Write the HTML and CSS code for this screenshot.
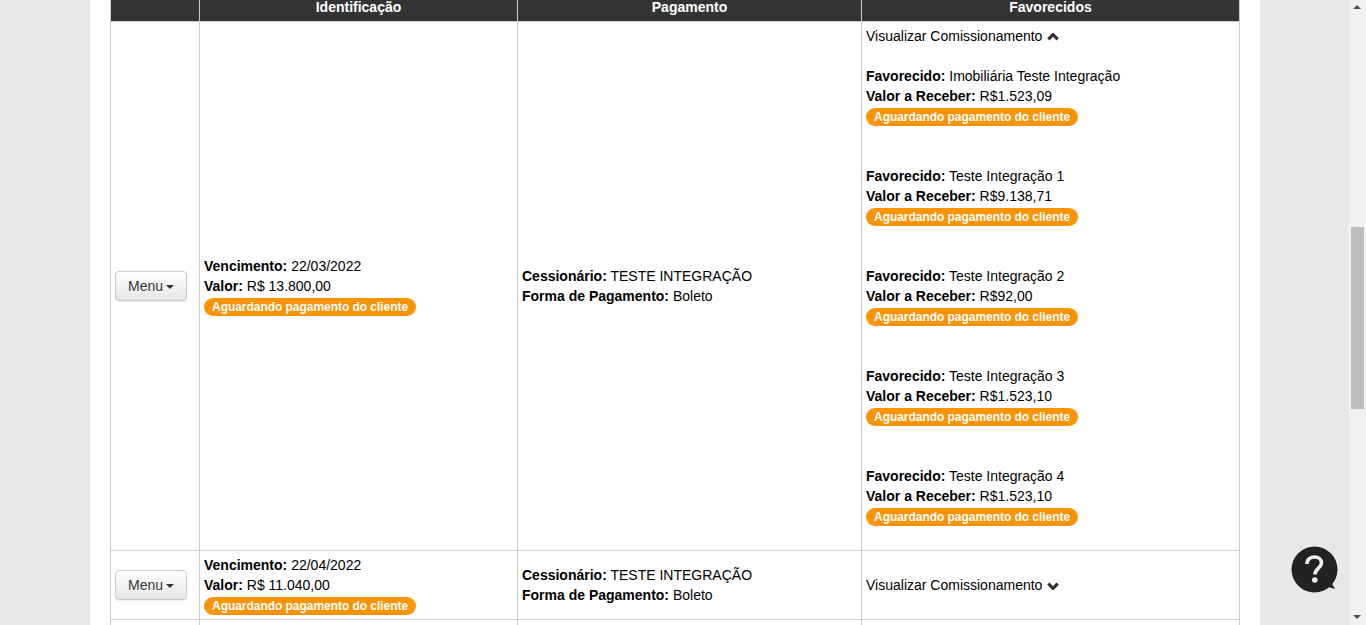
FILE: index.html
```html
<!DOCTYPE html>
<html lang="pt-BR">
<head>
    <title>Parcelas</title>
    <meta charset="UTF-8">
    <link rel="stylesheet" href="styles.css">
</head>
<body>
    <div id="wrapper">
        <div id="pageArea">
            <div id="content">
                <table class="parcelTable">
                    <thead>
                        <tr>
                            <th class="colMenu"></th>
                            <th class="colIdent">Identificação</th>
                            <th class="colPay">Pagamento</th>
                            <th>Favorecidos</th>
                        </tr>
                    </thead>
                    <tbody>
                        <tr>
                            <td><button class="menuBtn">Menu <span class="caret"></span></button></td>
                            <td>
                                <b>Vencimento:</b> 22/03/2022<br />
                                <b>Valor:</b> R$ 13.800,00<br />
                                <span class="statusLabel">Aguardando pagamento do cliente</span>
                            </td>
                            <td>
                                <b>Cessionário:</b> TESTE INTEGRAÇÃO<br />
                                <b>Forma de Pagamento:</b> Boleto
                            </td>
                            <td>
                                Visualizar Comissionamento
                                <svg class="chevron" width="12" height="8" viewBox="0 0 12 8"><polyline points="1.3,6.3 6,1.6 10.7,6.3" /></svg>
                                <br /><br />
                                <b>Favorecido:</b> Imobiliária Teste Integração<br />
                                <b>Valor a Receber:</b> R$1.523,09<br />
                                <span class="statusLabel">Aguardando pagamento do cliente</span><br /><br /><br />
                                <b>Favorecido:</b> Teste Integração 1<br />
                                <b>Valor a Receber:</b> R$9.138,71<br />
                                <span class="statusLabel">Aguardando pagamento do cliente</span><br /><br /><br />
                                <b>Favorecido:</b> Teste Integração 2<br />
                                <b>Valor a Receber:</b> R$92,00<br />
                                <span class="statusLabel">Aguardando pagamento do cliente</span><br /><br /><br />
                                <b>Favorecido:</b> Teste Integração 3<br />
                                <b>Valor a Receber:</b> R$1.523,10<br />
                                <span class="statusLabel">Aguardando pagamento do cliente</span><br /><br /><br />
                                <b>Favorecido:</b> Teste Integração 4<br />
                                <b>Valor a Receber:</b> R$1.523,10<br />
                                <span class="statusLabel">Aguardando pagamento do cliente</span><br /><br />
                            </td>
                        </tr>
                        <tr>
                            <td><button class="menuBtn">Menu <span class="caret"></span></button></td>
                            <td>
                                <b>Vencimento:</b> 22/04/2022<br />
                                <b>Valor:</b> R$ 11.040,00<br />
                                <span class="statusLabel">Aguardando pagamento do cliente</span>
                            </td>
                            <td>
                                <b>Cessionário:</b> TESTE INTEGRAÇÃO<br />
                                <b>Forma de Pagamento:</b> Boleto
                            </td>
                            <td>
                                Visualizar Comissionamento
                                <svg class="chevron" width="12" height="8" viewBox="0 0 12 8"><polyline points="1.3,1.7 6,6.4 10.7,1.7" /></svg>
                            </td>
                        </tr>
                        <tr class="nextRow">
                            <td></td>
                            <td></td>
                            <td></td>
                            <td></td>
                        </tr>
                    </tbody>
                </table>
            </div>
        </div>
        <div id="scrollBar">
            <div class="scrollArrow arrowUp"></div>
            <div class="scrollTrack"><div class="scrollThumb"></div></div>
            <div class="scrollArrow arrowDown"></div>
        </div>
    </div>
    <svg id="helpBtn" width="48" height="48" viewBox="0 0 48 48">
        <circle cx="23.5" cy="23.5" r="23" fill="#222" />
        <path d="M34 40 L44 43 L39 34 Z" fill="#222" />
        <path d="M16 18 C16 13 19.5 11 23.5 11 C27.5 11 30.5 13.5 30.5 17 C30.5 22 24 22.5 24 28.5" fill="none" stroke="#eee" stroke-width="3.6" />
        <circle cx="23.8" cy="34" r="2.8" fill="#eee" />
    </svg>
</body>
</html>
```

FILE: styles.css
```css
html, body {
    margin: 0;
    padding: 0;
    height: 100%;
    overflow: hidden;
}

body {
    font-family: "Liberation Sans", Arial, sans-serif;
    font-size: 14px;
    line-height: 20px;
    color: #000;
    background-color: #e9e7e7;
}

#wrapper {
    display: flex;
    height: 625px;
}

#pageArea {
    flex: 1;
    overflow: hidden;
}

#content {
    display: flow-root;
    width: 1130px;
    height: 100%;
    margin-left: 90px;
    padding: 0 20px;
    background-color: #fff;
}

.parcelTable {
    width: 1130px;
    margin-top: -8px; /* page is scrolled, top of the header is cut off */
    border-collapse: collapse;
    table-layout: fixed;
}

.parcelTable th,
.parcelTable td {
    border: 1px solid #ccc;
    padding: 4px;
    vertical-align: middle;
}

.parcelTable th {
    background-color: #333;
    color: #fff;
    text-align: center;
}

.colMenu {
    width: 80px;
}

.colIdent {
    width: 309px;
}

.colPay {
    width: 335px;
}

.nextRow td {
    height: 60px;
}

.menuBtn {
    font-family: inherit;
    font-size: 14px;
    line-height: 20px;
    color: #333;
    padding: 4px 12px;
    border: 1px solid #ccc;
    border-radius: 4px;
    background-image: linear-gradient(to bottom, #fff 0, #e6e6e6 100%);
    box-shadow: inset 0 1px 0 rgba(255, 255, 255, .15), 0 1px 1px rgba(0, 0, 0, .075);
    text-shadow: 0 1px 0 #fff;
    vertical-align: middle;
}

.caret {
    display: inline-block;
    width: 0;
    height: 0;
    margin-left: -1px;
    vertical-align: middle;
    border-top: 4px solid #333;
    border-left: 4px solid transparent;
    border-right: 4px solid transparent;
}

.statusLabel {
    display: inline-block;
    height: 18px;
    line-height: 18px;
    padding: 0 8px;
    border-radius: 9px;
    background-color: #f89406;
    color: #fff;
    font-size: 12px;
    font-weight: bold;
    letter-spacing: -0.04px;
    vertical-align: top;
    margin-top: 2px;
}

.chevron {
    margin-left: 1px;
}

.chevron polyline {
    fill: none;
    stroke: #333;
    stroke-width: 3.2;
}

#scrollBar {
    width: 17px;
    display: flex;
    flex-direction: column;
    background-color: #f1f1f1;
}

.scrollArrow {
    height: 17px;
    position: relative;
}

.scrollArrow:after {
    content: "";
    position: absolute;
    left: 4px;
    border-left: 4px solid transparent;
    border-right: 4px solid transparent;
}

.arrowUp:after {
    top: 5px;
    border-bottom: 4px solid #505050;
}

.arrowDown:after {
    top: 7px;
    border-top: 4px solid #505050;
}

.scrollTrack {
    flex: 1;
}

.scrollThumb {
    height: 182px;
    margin: 210px 2px 0;
    background-color: #bdbdbd;
}

#helpBtn {
    position: fixed;
    left: 1291px;
    top: 546px;
}
```
